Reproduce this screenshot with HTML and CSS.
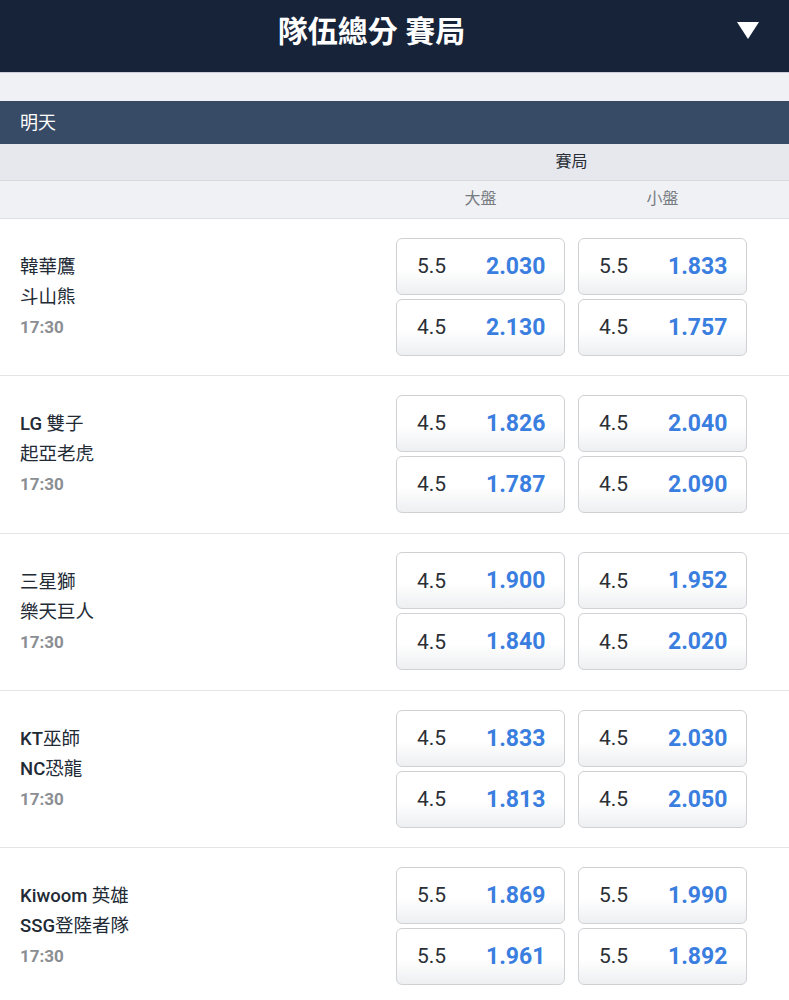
FILE: index.html
```html
<!DOCTYPE html>
<html lang="zh-Hant">
<head>
    <meta charset="UTF-8">
    <meta name="viewport" content="width=device-width, initial-scale=1.0">
    <title>隊伍總分 賽局</title>
    <link rel="stylesheet" href="styles.css">
</head>
<body>

    <!-- Top Bar -->
    <div class="topbar">
        <h1 class="topbar-title">隊伍總分 賽局</h1>
        <span class="topbar-arrow"></span>
    </div>

    <div class="spacer"></div>

    <!-- Day Header -->
    <div class="day">明天</div>

    <div class="market-head">
        <div class="market-name">賽局</div>
    </div>
    <div class="col-head">
        <div class="col-labels">
            <span>大盤</span>
            <span>小盤</span>
        </div>
    </div>

    <!-- Matches -->
    <div class="match">
        <div class="teams">
            <p>韓華鷹</p>
            <p>斗山熊</p>
            <p class="time">17:30</p>
        </div>
        <div class="odds">
            <div class="odd"><span class="line">5.5</span><span class="price">2.030</span></div>
            <div class="odd"><span class="line">5.5</span><span class="price">1.833</span></div>
            <div class="odd"><span class="line">4.5</span><span class="price">2.130</span></div>
            <div class="odd"><span class="line">4.5</span><span class="price">1.757</span></div>
        </div>
    </div>

    <div class="match">
        <div class="teams">
            <p><b>LG</b> 雙子</p>
            <p>起亞老虎</p>
            <p class="time">17:30</p>
        </div>
        <div class="odds">
            <div class="odd"><span class="line">4.5</span><span class="price">1.826</span></div>
            <div class="odd"><span class="line">4.5</span><span class="price">2.040</span></div>
            <div class="odd"><span class="line">4.5</span><span class="price">1.787</span></div>
            <div class="odd"><span class="line">4.5</span><span class="price">2.090</span></div>
        </div>
    </div>

    <div class="match">
        <div class="teams">
            <p>三星獅</p>
            <p>樂天巨人</p>
            <p class="time">17:30</p>
        </div>
        <div class="odds">
            <div class="odd"><span class="line">4.5</span><span class="price">1.900</span></div>
            <div class="odd"><span class="line">4.5</span><span class="price">1.952</span></div>
            <div class="odd"><span class="line">4.5</span><span class="price">1.840</span></div>
            <div class="odd"><span class="line">4.5</span><span class="price">2.020</span></div>
        </div>
    </div>

    <div class="match">
        <div class="teams">
            <p><b>KT</b>巫師</p>
            <p><b>NC</b>恐龍</p>
            <p class="time">17:30</p>
        </div>
        <div class="odds">
            <div class="odd"><span class="line">4.5</span><span class="price">1.833</span></div>
            <div class="odd"><span class="line">4.5</span><span class="price">2.030</span></div>
            <div class="odd"><span class="line">4.5</span><span class="price">1.813</span></div>
            <div class="odd"><span class="line">4.5</span><span class="price">2.050</span></div>
        </div>
    </div>

    <div class="match">
        <div class="teams">
            <p><b>Kiwoom</b> 英雄</p>
            <p><b>SSG</b>登陸者隊</p>
            <p class="time">17:30</p>
        </div>
        <div class="odds">
            <div class="odd"><span class="line">5.5</span><span class="price">1.869</span></div>
            <div class="odd"><span class="line">5.5</span><span class="price">1.990</span></div>
            <div class="odd"><span class="line">5.5</span><span class="price">1.961</span></div>
            <div class="odd"><span class="line">5.5</span><span class="price">1.892</span></div>
        </div>
    </div>

</body>
</html>
```

FILE: styles.css
```css
/* General */
body {
    margin: 0;
    padding: 0;
    background: #ffffff;
    font-family: Roboto, "Noto Sans CJK TC", sans-serif;
    color: #222a35;
}

p {
    margin: 0;
}

/* Top Bar */
.topbar {
    height: 73px;
    background: #172338;
    display: flex;
    align-items: center;
    justify-content: center;
    position: relative;
    border-bottom: 1px solid #c9ced8;
    box-sizing: border-box;
    padding-right: 46px;
}

.topbar-title {
    margin: 0;
    color: #ffffff;
    font-size: 30px;
    font-weight: bold;
    margin-top: -14px;
}

.topbar-arrow {
    position: absolute;
    right: 30px;
    top: 22px;
    width: 0;
    height: 0;
    border-left: 11px solid transparent;
    border-right: 11px solid transparent;
    border-top: 17px solid #ffffff;
}

.spacer {
    height: 28px;
    background: #f0f1f5;
}

/* Day */
.day {
    height: 43px;
    line-height: 43px;
    background: #384b66;
    color: #ffffff;
    font-size: 18px;
    padding-left: 20px;
}

/* Column Heads */
.market-head {
    height: 37px;
    background: #e6e8ee;
    border-bottom: 1px solid #d6d9e0;
    box-sizing: border-box;
    display: flex;
}

.market-name {
    margin-left: 396px;
    width: 351px;
    text-align: center;
    line-height: 36px;
    font-size: 16px;
    color: #2a2f38;
}

.col-head {
    height: 38px;
    background: #f0f1f5;
    border-bottom: 1px solid #dcdfe5;
    box-sizing: border-box;
}

.col-labels {
    margin-left: 396px;
    width: 351px;
    display: grid;
    grid-template-columns: 169px 169px;
    column-gap: 13px;
    line-height: 36px;
    font-size: 16px;
    color: #777b82;
    text-align: center;
}

/* Match Rows */
.match {
    height: 157.3px;
    display: flex;
    align-items: center;
    border-bottom: 1px solid #e3e4e7;
    box-sizing: border-box;
}

.teams {
    width: 376px;
    padding-left: 20px;
    font-size: 18.5px;
    line-height: 30px;
    color: #222a35;
}

.teams b {
    font-weight: 500;
}

.time {
    color: #8b8e93;
    font-size: 17px;
    font-weight: bold;
}

.odds {
    display: grid;
    grid-template-columns: 169px 169px;
    column-gap: 13px;
    row-gap: 4px;
    margin-top: -1px;
}

.odd {
    height: 57px;
    display: flex;
    align-items: center;
    box-sizing: border-box;
    border: 1px solid #cfd1d5;
    border-radius: 6px;
    background: linear-gradient(#ffffff 55%, #eeeff1);
    padding-left: 20px;
}

.line {
    width: 69px;
    font-size: 21px;
    color: #2b2f36;
}

.price {
    font-size: 23px;
    font-weight: bold;
    color: #3a7ee0;
}
```
